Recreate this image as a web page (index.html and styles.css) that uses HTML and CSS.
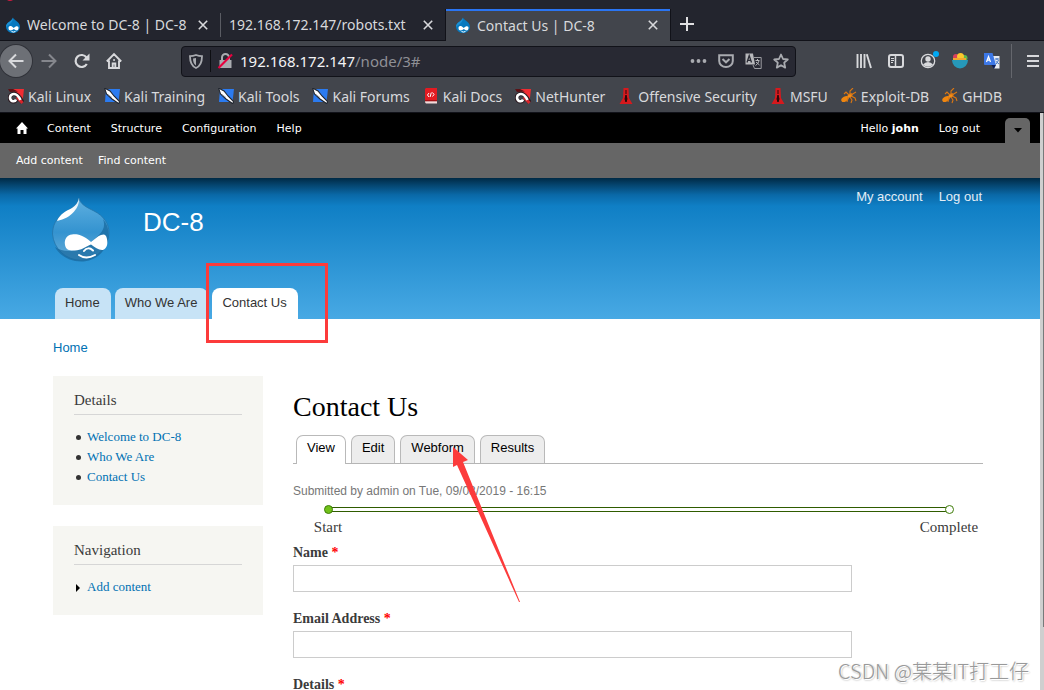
FILE: index.html
```html
<!DOCTYPE html>
<html lang="en">
<head>
<meta charset="utf-8">
<title>Contact Us | DC-8</title>
<link rel="stylesheet" href="styles.css">
</head>
<body>
<svg class="defs" aria-hidden="true">
  <symbol id="drop" viewBox="0 0 16 16">
    <path d="M8 .5C8.500 3 15 4.500 15 10A6.800 6 0 0 1 1 10C1 5 7 4.500 8 .5z" fill="#0779bf"/>
    <path d="M8 .5C7 4.500 1 5 1 10 4 7 8 6 8 .5z" fill="#1c8fd2"/>
    <path d="M8.800 11C6 8 3.500 8.500 3.500 11.300S7 14 8.800 12C11 14 13 14 13.500 11.500S11 8.500 8.800 11z" fill="#fff"/>
    <path d="M6.500 14.500q2 1.200 4-.1" fill="none" stroke="#fff"/>
  </symbol>
  <symbol id="close" viewBox="0 0 10 10"><path d="M.8.800l8.400 8.400M9.200.800L.8 9.200" stroke="currentColor" stroke-width="1.600"/></symbol>
  <symbol id="kali" viewBox="0 0 16 16">
    <path d="M4 1h12l-1.500 13L9 5z" fill="#f02c32"/><path d="M0 1h5l5 2.500-8 .5z" fill="#5c1216"/>
    <path d="M14.500 14.500C12 9.500 8 5 4.500 6.200S.8 11.500 4 13.200c2 .7 3.800 0 4.200-1.700" fill="none" stroke="#2b1b21" stroke-width="4.200"/>
    <path d="M9 9l5.500 6" stroke="#d9252b" stroke-width="3"/>
    <path d="M12.500 12C10.500 8 7.500 5.300 4.500 6.300S1.200 11.500 4 13c2 .6 3.500 0 4-1.500" fill="none" stroke="#fff" stroke-width="2.600"/>
  </symbol>
  <symbol id="knife" viewBox="0 0 16 16">
    <path d="M2 1h14l-1.500 13H1z" fill="#2b7bf0"/>
    <path d="M.5 0l5.500 3 4 5 6 6-1.500 1.500L8 11 2.500 6z" fill="#fff" stroke="#20252e" stroke-width="1.100"/>
    <path d="M4 6.500l4 3" stroke="#8d98a8" stroke-width=".8"/>
  </symbol>
  <symbol id="docs" viewBox="0 0 16 16">
    <path d="M3 0h11v13H2V1z" fill="#e31b22"/><path d="M2 13h12v2.500H3q-1-.5-1-2.500z" fill="#f3dada"/><path d="M2 12.800h12" stroke="#8c0c10"/>
    <path d="M6 5L4.500 7 6 9M9.500 4.500L11 6.500l-1.500 2M8.300 4.500l-1.200 4.500" fill="none" stroke="#fff"/>
  </symbol>
  <symbol id="spike" viewBox="0 0 16 16">
    <path d="M5.500 0h5l.5 10 3.500 6h-13L5 10z" fill="#d6191d"/><path d="M8 2v4M8 7l-1 4 1 3 1-3z" fill="#26080a" stroke="#26080a"/>
  </symbol>
  <symbol id="bug" viewBox="0 0 16 16">
    <ellipse cx="4" cy="11" rx="4" ry="2.500" transform="rotate(-28 4 11)" fill="#ef8610"/>
    <ellipse cx="9" cy="7.500" rx="2.800" ry="1.800" transform="rotate(-30 9 7.500)" fill="#f58e17"/>
    <path d="M8 7L5 4 3 6M9 7V3l3-3M10 7l5-3M10 8l4 2 1 3M9 9l2 3-1 3M7 9l-1 5" fill="none" stroke="#dc7712" stroke-width="1.100"/>
  </symbol>
</svg>

<div class="browser">
  <header class="tabstrip">
    <svg class="speck" width="10" height="2" viewBox="0 0 10 2" aria-hidden="true"><path d="M2 0h8q-3 2-6 0z" fill="#d01c40"/></svg>
    <div class="tab tab-first">
      <svg class="ico"><use href="#drop"/></svg><span class="tab-title">Welcome to DC-8 | DC-8</span>
      <button class="x" aria-label="Close tab"><svg width="10" height="10"><use href="#close"/></svg></button>
    </div>
    <div class="tab tab-plain">
      <span class="tab-title">192.168.172.147/robots.txt</span>
      <button class="x" aria-label="Close tab"><svg width="10" height="10"><use href="#close"/></svg></button>
    </div>
    <div class="tab tab-active">
      <svg class="ico"><use href="#drop"/></svg><span class="tab-title">Contact Us | DC-8</span>
      <button class="x" aria-label="Close tab"><svg width="10" height="10"><use href="#close"/></svg></button>
    </div>
    <button class="newtab" aria-label="New tab"><svg width="14" height="14" viewBox="0 0 14 14"><path d="M7 0v14M0 7h14" stroke="currentColor" stroke-width="2"/></svg></button>
  </header>

  <div class="navbar">
    <div class="nav-buttons">
      <button class="back" aria-label="Back"><svg class="ico" viewBox="0 0 16 16"><path d="M15.500 8H1.500M8 1.500L1.500 8 8 14.500" fill="none" stroke="currentColor" stroke-width="2"/></svg></button>
      <button class="fwd" aria-label="Forward" disabled><svg class="ico" viewBox="0 0 16 16"><path d="M.5 8h14M8 1.500L14.500 8 8 14.500" fill="none" stroke="currentColor" stroke-width="2"/></svg></button>
      <button aria-label="Reload"><svg class="ico" viewBox="0 0 16 16"><path d="M12.800 11A6 6 0 1 1 12.500 4.500" fill="none" stroke="currentColor" stroke-width="2.200"/><path d="M15.500.5v7h-7z" fill="currentColor"/></svg></button>
      <button aria-label="Home"><svg class="ico" viewBox="0 0 16 16"><path d="M.8 8.500L8 1.200l7.200 7.300M3 7.500V15h10V7.500M6.700 15v-4.500h2.600V15" fill="none" stroke="currentColor" stroke-width="1.900"/><path d="M7.300 6h1.500v2H7.300z" fill="currentColor"/></svg></button>
    </div>
    <div class="urlbar">
      <svg class="shield" width="14" height="15" viewBox="0 0 14 15"><path d="M7 1C5 1.800 3 2.200 1 2.200 1 8 2.500 12 7 14c4.500-2 6-6 6-11.800-2 0-4-.4-6-1.200z" fill="none" stroke="currentColor" stroke-width="1.800"/><path d="M7 4v7.500C4.800 10 4 8 4 4.600z" fill="currentColor"/></svg>
      <span class="sep"></span>
      <svg class="lock" width="15" height="16" viewBox="0 0 15 16"><path d="M4 8V4.500a3.500 3.500 0 0 1 7 0V8" fill="none" stroke="currentColor" stroke-width="2"/><path d="M1.500 7h12v8h-12z" fill="currentColor"/><path d="M.5 15L14 1.500" stroke="#e8003e" stroke-width="2.200"/></svg>
      <p class="url"><span class="host">192.168.172.147</span>/node/3#</p>
      <div class="url-actions">
        <svg width="17" height="16" viewBox="0 0 17 16"><g fill="currentColor"><circle cx="2.500" cy="8" r="1.900"/><circle cx="8.500" cy="8" r="1.900"/><circle cx="14.500" cy="8" r="1.900"/></g></svg>
        <svg width="16" height="16" viewBox="0 0 16 16"><path d="M1.200 2.200h13.600V8a6.800 6 0 0 1-13.600 0z" fill="none" stroke="currentColor" stroke-width="2"/><path d="M4.500 6L8 9.300 11.500 6" fill="none" stroke="currentColor" stroke-width="2"/></svg>
        <svg width="17" height="16" viewBox="0 0 17 16"><path d="M.5.500H8l2 11H.5z" fill="#b7b8bb"/><path d="M2 9.500l2.200-7 2.300 7M2.800 7.300h3" fill="none" stroke="#2a2b35" stroke-width="1.300"/><path d="M9 4.500h7.200v11H9.500L8 12" fill="none" stroke="#9b9ca1"/><path d="M10.500 7.500h4M12.500 6v1.500M14 8q-1 3-3.500 4.500M11 9l3.500 3" fill="none" stroke="#b7b8bb"/></svg>
        <svg width="16" height="16" viewBox="0 0 16 16"><path d="M8 1.500l2 4.500 4.800.5-3.600 3.200 1 4.900L8 12.200l-4.200 2.400 1-4.900L1.200 6.500 6 6z" fill="none" stroke="currentColor" stroke-width="1.800" stroke-linejoin="round"/></svg>
      </div>
    </div>
    <div class="tools">
      <svg class="ico" viewBox="0 0 16 16"><path d="M1.500 1v14M5 1v14M8.500 1v14M10.800 1.300L15 15" stroke="currentColor" stroke-width="1.900"/></svg>
      <svg class="ico" viewBox="0 0 16 16"><rect x="1" y="2" width="14" height="12" rx="2" fill="none" stroke="currentColor" stroke-width="2"/><path d="M7.500 2v12" stroke="currentColor" stroke-width="1.500"/><path d="M3 5.500h3M3 7.500h3M3 9.500h2" stroke="currentColor"/></svg>
      <svg class="ico" viewBox="0 0 16 16"><circle cx="8" cy="8" r="6.700" fill="none" stroke="currentColor" stroke-width="1.300"/><circle cx="8" cy="6" r="2.700" fill="currentColor"/><path d="M3 11.500q2-2.500 5-2.500t5 2.500q-2 2.200-5 2.200t-5-2.200z" fill="currentColor"/><circle cx="16" cy="1" r="3" fill="#00a9f4"/></svg>
      <svg class="ico" viewBox="0 0 16 16"><circle cx="4" cy="4" r="3" fill="#d9405c"/><circle cx="12.500" cy="5" r="3" fill="#62b84a"/><circle cx="8.500" cy="3.500" r="3.500" fill="#fcc72c"/><path d="M1 5h13v2H1z" fill="#f2a630"/><path d="M0 7h16a8 8.500 0 0 1-16 0z" fill="#2698b9"/></svg>
      <svg class="ico" viewBox="0 0 16 16"><path d="M7 3h8.500v12.500H10z" fill="#e8ebf1"/><path d="M0 0h8.500L12 12H1q-1 0-1-1z" fill="#3d78e7"/><path d="M2.500 9l2-5.500 2 5.500M3.300 7.200h2.500" stroke="#fff" fill="none" stroke-width="1.200"/><path d="M7.500 12H12l-2 4z" fill="#0b1d58"/><path d="M11 6h4M13 5v2M14.500 7q-1 3-3 4.500M11.500 8l3.500 3" fill="none" stroke="#4577c5"/></svg>
      <span class="tool-sep"></span>
      <button class="menu" aria-label="Open menu"><svg width="12" height="14" viewBox="0 0 12 14"><path d="M0 2h12M0 7h12M0 12h12" stroke="currentColor" stroke-width="2"/></svg></button>
    </div>
  </div>

  <nav class="bookmarks" aria-label="Bookmarks">
    <a href="#"><svg class="ico"><use href="#kali"/></svg>Kali Linux</a>
    <a href="#"><svg class="ico"><use href="#knife"/></svg>Kali Training</a>
    <a href="#"><svg class="ico"><use href="#knife"/></svg>Kali Tools</a>
    <a href="#"><svg class="ico"><use href="#knife"/></svg>Kali Forums</a>
    <a href="#"><svg class="ico"><use href="#docs"/></svg>Kali Docs</a>
    <a href="#"><svg class="ico"><use href="#kali"/></svg>NetHunter</a>
    <a href="#"><svg class="ico"><use href="#spike"/></svg>Offensive Security</a>
    <a href="#"><svg class="ico"><use href="#spike"/></svg>MSFU</a>
    <a href="#"><svg class="ico"><use href="#bug"/></svg>Exploit-DB</a>
    <a href="#"><svg class="ico"><use href="#bug"/></svg>GHDB</a>
  </nav>

  <div class="viewport">
    <div class="page">
      <nav class="admin" aria-label="Administration">
        <a class="admin-home" href="#" aria-label="Home"><svg width="12" height="12" viewBox="0 0 12 12"><path d="M6 0l6 6.500h-1.500V12h-3V8h-3v4h-3V6.500H0z" fill="#fff"/></svg></a>
        <a href="#">Content</a><a href="#">Structure</a><a href="#">Configuration</a><a href="#">Help</a>
        <a class="hello" href="#">Hello <strong>john</strong></a><a href="#">Log out</a>
        <button class="drawer" aria-label="Hide shortcuts"><svg width="8" height="5" viewBox="0 0 8 5"><path d="M0 0h8L4 4.500z" fill="#000"/></svg></button>
      </nav>
      <nav class="shortcuts" aria-label="Shortcuts"><a href="#">Add content</a><a href="#">Find content</a></nav>

      <header class="site-header">
        <div class="brand">
          <svg class="logo" width="58" height="66" viewBox="0 0 58 66" role="img" aria-label="Drupal">
            <defs>
              <linearGradient id="body" x1="0" y1="0" x2="0" y2="1"><stop offset="0" stop-color="#5fb0e0"/><stop offset=".55" stop-color="#3493d0"/><stop offset="1" stop-color="#69aed8"/></linearGradient>
              <linearGradient id="shine" x1="0" y1="1" x2="1" y2="0"><stop offset="0" stop-color="#fff"/><stop offset=".5" stop-color="#fff"/><stop offset="1" stop-color="#d5eaf7"/></linearGradient>
            </defs>
            <path d="M27 1C28 7 34 10 42 14 52 19 57 27 57 36A28.300 28.300 0 0 1 .5 37C.5 29 4 21 12 16 20 11 26 8 27 1z" fill="url(#body)" stroke="#2475aa" stroke-width=".8"/>
            <path d="M51 22C57 29 58 38 55 46 51 58 41 64.500 29 64.500 17 64.500 7 58 3 50c10 7 25 4 35-4C47 38 55 33 51 22z" fill="#1a699f" opacity=".75"/>
            <path d="M27 1C28 10 20 21 5 24 8 17 14 14 20 11q6-4 7-10z" fill="url(#shine)"/>
            <path d="M39 45C30 37 24 37 20 37.500 15 38 12 42 13 48c1 5 5 6 10 5.500 6 0 11-4 16-6 4 3 8 6 12 5.500 4-2 5-6 4-11s-3-5-6-4-6 4-10 7z" fill="#fff"/>
            <path d="M32 54q4-5 9-.5M27 58q7 5 16 0" fill="none" stroke="#fff" stroke-width="2" stroke-linecap="round"/>
          </svg>
          <a class="site-name" href="#">DC-8</a>
          <nav class="user-menu" aria-label="User"><a href="#">My account</a><a href="#">Log out</a></nav>
        </div>
        <ul class="main-menu">
          <li><a href="#">Home</a></li>
          <li><a href="#">Who We Are</a></li>
          <li class="current"><a href="#">Contact Us</a><span class="highlight"></span></li>
        </ul>
      </header>

      <nav class="breadcrumb" aria-label="Breadcrumb"><a href="#">Home</a></nav>

      <div class="columns">
        <aside class="sidebar">
          <section class="block">
            <h2>Details</h2>
            <ul><li><a href="#">Welcome to DC-8</a></li><li><a href="#">Who We Are</a></li><li><a href="#">Contact Us</a></li></ul>
          </section>
          <section class="block">
            <h2>Navigation</h2>
            <ul><li class="collapsed"><a href="#">Add content</a></li></ul>
          </section>
        </aside>
        <main class="content">
          <h1>Contact Us</h1>
          <ul class="page-tabs">
            <li class="on"><a href="#">View</a></li>
            <li><a href="#">Edit</a></li>
            <li><a href="#">Webform</a>
              <svg class="arrow" width="68" height="157" viewBox="0 0 68 157" aria-hidden="true"><path d="M0 0L15 13 10 15 67 155 66 155 4 18 0 20z" fill="#fc3b3b"/></svg>
            </li>
            <li><a href="#">Results</a></li>
          </ul>
          <p class="submitted">Submitted by admin on Tue, 09/03/2019 - 16:15</p>
          <ol class="progress">
            <li class="step done">Start</li>
            <li class="step">Complete</li>
          </ol>
          <form>
            <div class="field"><label for="name">Name <span>*</span></label><input id="name" type="text"></div>
            <div class="field"><label for="email">Email Address <span>*</span></label><input id="email" type="email"></div>
            <div class="field"><label for="details">Details <span>*</span></label><textarea id="details" rows="5"></textarea></div>
          </form>
        </main>
      </div>
    </div>
    <div class="scrollbar"><span></span></div>
  </div>
  <p class="watermark">CSDN @某某IT打工仔</p>
</div>
</body>
</html>
```
FILE: styles.css
```css
*, *::before { box-sizing: border-box; }
body { margin: 0; background: #fff; }
ul, ol, p, h1, h2 { margin: 0; padding: 0; }
ul, ol { list-style: none; }
a { text-decoration: none; color: inherit; }
button { border: 0; padding: 0; background: none; color: inherit; display: flex; align-items: center; justify-content: center; }
svg { display: block; flex: none; overflow: visible; }
.defs { position: absolute; width: 0; height: 0; }
.ico { width: 16px; height: 16px; }

.browser { position: relative; height: 100vh; overflow: hidden; display: flex; flex-direction: column; font-family: "Noto Sans", sans-serif; font-size: 14px; color: #d8d9dc; }
.tabstrip, .navbar, .bookmarks { flex: none; }

/* Tabs */
.tabstrip { position: relative; display: flex; height: 41px; padding-top: 9px; background: #23252e; border-bottom: 1px solid #111219; }
.speck { position: absolute; left: 3px; top: 0; }
.tab { display: flex; align-items: center; gap: 6px; white-space: nowrap; }
.tab-title { flex: 1; }
.tab-first { width: 220px; padding: 0 12px 0 5px; }
.tab-plain { position: relative; width: 225px; padding: 0 12px 0 9px; }
.tab-plain::before { content: ""; align-self: center; position: absolute; left: 0; width: 1px; height: 24px; background: #5a5c63; }
.tab-active { width: 226px; padding: 0 12px 0 9px; margin-bottom: -1px; background: #42454c; border: 1px solid #111219; border-width: 0 1px; box-shadow: inset 0 2px #2a75f3; }
.newtab { width: 32px; height: 30px; color: #e0e0e2; }

/* Navigation toolbar */
.navbar { display: flex; align-items: center; height: 40px; background: #42454c; }
.nav-buttons { display: flex; width: 181px; }
.nav-buttons button { width: 32px; height: 32px; }
.nav-buttons .back { background: #6d7076; border-radius: 50%; box-shadow: 0 0 0 1px #303239; }
.nav-buttons .fwd { width: 34px; color: #85878d; }
.urlbar { flex: 1; display: flex; align-items: center; height: 31px; padding: 0 6px 0 7px; background: #282933; border: 1px solid #111219; border-radius: 4px; color: #a9abb0; }
.sep { width: 1px; height: 22px; margin: 0 7px; background: #0d0e12; }
.url { flex: 1; padding-left: 7px; font-size: 15px; color: #8f9096; white-space: nowrap; }
.host { color: #f3f3f5; }
.url-actions { display: flex; gap: 11px; }
.tools { display: flex; align-items: center; gap: 16px; width: 248px; padding-left: 60px; }
.tool-sep { width: 1px; height: 34px; background: #65676d; margin: 0 -1px 0 -5px; }
.menu { width: 12px; height: 32px; }

.bookmarks { display: flex; align-items: center; gap: 13px; height: 32px; padding: 0 8px 1px; background: #42454c; border-bottom: 1px solid #111219; white-space: nowrap; }
.bookmarks a { display: flex; align-items: center; gap: 4px; }

/* Web page */
.viewport { flex: 1; min-height: 0; display: flex; }
.page { flex: 1; overflow: hidden; background: #fff; color: #3b3b3b; }
.scrollbar { width: 4px; background: #cfcfcf; }
.scrollbar span { display: block; width: 1px; height: 89%; margin-left: 3px; background: #77797a; }

.admin { display: flex; align-items: center; gap: 20px; height: 30px; padding: 0 10px 0 16px; background: #000; color: #fff; font: 11px "DejaVu Sans", sans-serif; }
.admin-home { margin-right: -1px; }
.hello { margin-left: auto; }
.drawer { align-self: flex-end; width: 25px; height: 25px; margin-left: 5px; background: #666; border-radius: 5px 5px 0 0; }
.shortcuts { display: flex; align-items: center; gap: 15px; height: 35px; padding: 0 16px; background: #666; color: #fff; font: 11px "DejaVu Sans", sans-serif; }

.site-header { display: flex; flex-direction: column; justify-content: space-between; height: 141px; padding: 0 58px 0 52px; background: linear-gradient(#002a45 0, #05456f 7px, #0a69a8 17px, #0f7fc5 28px, #48a9e4 100%); font-family: "Liberation Sans", sans-serif; }
.brand { display: flex; align-items: flex-start; }
.logo { margin-top: 19px; }
.site-name { margin: 29px 0 0 33px; font-size: 26px; line-height: 30px; color: #fff; }
.user-menu { display: flex; gap: 16px; margin: 10px 0 0 auto; font-size: 13px; line-height: 17px; color: #e4eef6; }
.main-menu { display: flex; gap: 4px; padding-left: 3px; font-size: 13px; }
.main-menu li { position: relative; }
.main-menu a { display: block; height: 31px; padding: 0 11px 0 10px; line-height: 30px; background: #c7e3f6; border-radius: 8px 8px 0 0; color: #333; }
.main-menu .current a { background: #fff; }
.highlight { position: absolute; left: -6px; top: -25px; width: 122px; height: 80px; border: 3px solid #fc3b3b; }

.breadcrumb { padding: 20px 53px 0; font: 13px/17px "Liberation Sans", sans-serif; color: #0071b3; }
.columns { display: flex; gap: 30px; padding: 20px 57px 0 53px; font-family: "Liberation Serif", serif; }
.sidebar { width: 210px; flex: none; display: flex; flex-direction: column; gap: 21px; }
.block { padding: 15px 21px 18px; background: #f6f6f2; }
.block h2 { padding: 0 0 4px; border-bottom: 1px solid #d6d6d6; font-size: 15px; font-weight: 400; line-height: 19px; }
.block ul { padding: 12px 0 0 13px; }
.block li { position: relative; font-size: 13px; line-height: 20px; color: #0071b3; }
.block li::before { content: ""; position: absolute; left: -11px; top: 8px; width: 5px; height: 5px; border-radius: 50%; background: #333; }
.block .collapsed::before { width: 4px; height: 8px; top: 7px; border-radius: 0; background: #000; clip-path: polygon(0 0, 100% 50%, 0 100%); }

.content { flex: 1; min-width: 0; }
.content h1 { padding-top: 15px; font-size: 28px; font-weight: 400; line-height: 32px; color: #000; }
.page-tabs { display: flex; gap: 5px; height: 29px; margin-top: 12px; padding-left: 3px; border-bottom: 1px solid #b5b5b5; font: 13px "Liberation Sans", sans-serif; }
.page-tabs li { position: relative; }
.page-tabs a { display: block; height: 28px; padding: 0 10px; line-height: 24px; background: #ededed; border: 1px solid #b9b9b9; border-bottom: 0; border-radius: 7px 7px 0 0; color: #000; }
.page-tabs .on a { height: 29px; background: #fff; }
.arrow { position: absolute; left: 53px; top: 12px; z-index: 2; }
.submitted { padding-top: 20px; font: 12px/14px "Liberation Sans", sans-serif; color: #777; }

.progress { position: relative; display: flex; justify-content: space-between; margin-top: 7px; font-size: 15px; line-height: 18px; }
.progress::before { content: ""; position: absolute; left: 35px; right: 34px; top: 2px; height: 5px; border: 1px solid #2f5c00; border-width: 1px 0; }
.step { position: relative; width: 70px; padding-top: 13px; text-align: center; }
.step:last-child { width: 68px; }
.step::before { content: ""; position: absolute; left: 50%; top: 0; width: 9px; height: 9px; margin-left: -4px; border: 1px solid #3f7d0a; border-radius: 50%; background: #fff; }
.done::before { background: #71c219; }

form { padding-top: 8px; }
.field { margin-bottom: 18px; }
.field label { display: block; padding-bottom: 3px; font-size: 14px; font-weight: 700; line-height: 18px; }
.field span { color: #f00; }
.field input, .field textarea { display: block; width: 81%; height: 27px; padding: 2px 4px; border: 1px solid #ccc; background: #fff; }
.field textarea { height: 120px; }

.watermark { position: absolute; right: 15px; bottom: 4px; font: 300 20px/30px "Noto Sans CJK SC", sans-serif; color: #999; text-shadow: 1px 1px 0 #fff, 1px 1px 2px #888; }
```
